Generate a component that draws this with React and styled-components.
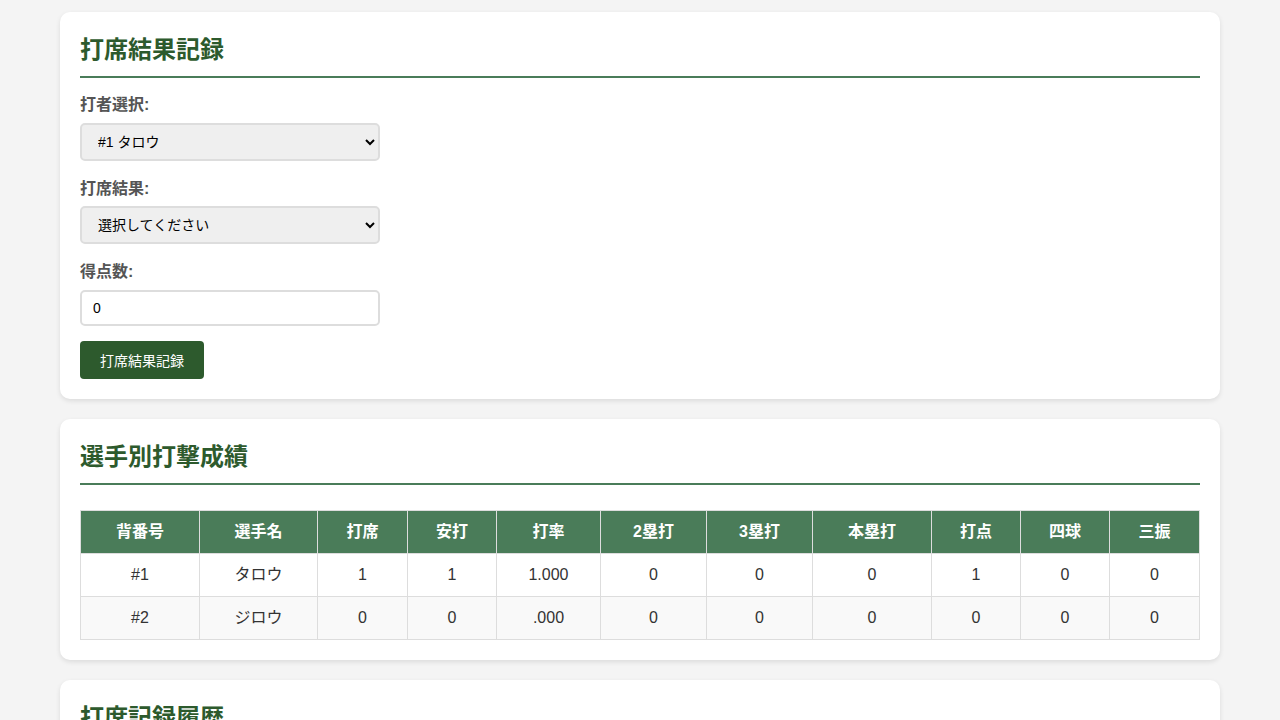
import React, { useState } from 'react';
import styled, { createGlobalStyle } from 'styled-components';

const GlobalStyle = createGlobalStyle`
  body {
    margin: 0;
    background: #f4f4f4;
    font-family: 'Liberation Sans', Arial, 'Noto Sans CJK JP', sans-serif;
    color: #333;
  }
`;

const Container = styled.div`
  max-width: 1160px;
  margin: 0 auto;
  padding: 12px 20px;
`;

const Card = styled.section`
  background: white;
  border-radius: 10px;
  padding: 20px;
  margin-bottom: 20px;
  box-shadow: 0 2px 5px rgba(0,0,0,0.1);
`;

const Title = styled.h2`
  margin: 0 0 14px;
  padding-bottom: 8px;
  font-size: 24px;
  line-height: 36px;
  font-weight: bold;
  color: #2d5a2d;
  border-bottom: 2px solid #4a7c59;
`;

const FormGroup = styled.div`
  margin-bottom: 15px;
`;

const Label = styled.label`
  display: block;
  margin-bottom: 5px;
  font-size: 16px;
  line-height: 25.5px;
  font-weight: bold;
  color: #555;
`;

const Select = styled.select`
  display: block;
  width: 300px;
  height: 38px;
  box-sizing: border-box;
  padding: 0 12px;
  border: 2px solid #ddd;
  border-radius: 5px;
  background: #efefef;
  font-size: 14px;
  font-family: inherit;
  color: #000;
`;

const Input = styled.input`
  display: block;
  width: 300px;
  height: 36px;
  box-sizing: border-box;
  padding: 0 11px;
  border: 2px solid #ddd;
  border-radius: 5px;
  font-size: 14px;
  font-family: inherit;
`;

const Button = styled.button`
  display: block;
  height: 38px;
  background: #2d5a2d;
  color: white;
  border: none;
  border-radius: 4px;
  padding: 0 20px;
  font-size: 14px;
  font-family: inherit;
  cursor: pointer;
`;

const Table = styled.table`
  width: 100%;
  border-collapse: collapse;
  margin-top: 25px;
`;

const Col = styled.col`
  width: ${p => p.$w}px;
`;

const Th = styled.th`
  background: #4a7c59;
  color: white;
  font-weight: bold;
  font-size: 16px;
  line-height: 18px;
  padding: 12px;
  border: 1px solid #ddd;
  text-align: center;
`;

const Row = styled.tr`
  background: ${p => (p.$alt ? '#f9f9f9' : 'white')};
`;

const Td = styled.td`
  padding: 12px;
  border: 1px solid #ddd;
  text-align: center;
  font-size: 16px;
  line-height: 18px;
  color: #333;
`;

const Empty = styled.p`
  margin: 0;
  color: #777;
  font-size: 14px;
`;

const headers = ['背番号', '選手名', '打席', '安打', '打率', '2塁打', '3塁打', '本塁打', '打点', '四球', '三振'];
const widths = [119, 118, 90, 89, 104, 106, 106, 119, 89, 89, 90];

const players = [
  { no: '#1', name: 'タロウ', pa: 1, h: 1, avg: '1.000', d: 0, t: 0, hr: 0, rbi: 1, bb: 0, so: 0 },
  { no: '#2', name: 'ジロウ', pa: 0, h: 0, avg: '.000', d: 0, t: 0, hr: 0, rbi: 0, bb: 0, so: 0 },
];

export default function App() {
  const [runs, setRuns] = useState('0');

  return (
    <Container>
      <GlobalStyle />
      <Card>
        <Title>打席結果記録</Title>
        <FormGroup>
          <Label htmlFor="batter">打者選択:</Label>
          <Select id="batter" defaultValue="1">
            <option value="1">#1 タロウ</option>
            <option value="2">#2 ジロウ</option>
          </Select>
        </FormGroup>
        <FormGroup>
          <Label htmlFor="result">打席結果:</Label>
          <Select id="result" defaultValue="">
            <option value="">選択してください</option>
            <option value="single">安打</option>
            <option value="double">2塁打</option>
            <option value="triple">3塁打</option>
            <option value="hr">本塁打</option>
            <option value="bb">四球</option>
            <option value="so">三振</option>
            <option value="out">凡退</option>
          </Select>
        </FormGroup>
        <FormGroup>
          <Label htmlFor="runs">得点数:</Label>
          <Input id="runs" type="number" min="0" value={runs} onChange={(e) => setRuns(e.target.value)} />
        </FormGroup>
        <Button>打席結果記録</Button>
      </Card>

      <Card>
        <Title>選手別打撃成績</Title>
        <Table>
          <colgroup>
            {widths.map((w, i) => <Col key={i} $w={w} />)}
          </colgroup>
          <thead>
            <tr>
              {headers.map((h) => <Th key={h}>{h}</Th>)}
            </tr>
          </thead>
          <tbody>
            {players.map((p, i) => (
              <Row key={p.no} $alt={i % 2 === 1}>
                <Td>{p.no}</Td>
                <Td>{p.name}</Td>
                <Td>{p.pa}</Td>
                <Td>{p.h}</Td>
                <Td>{p.avg}</Td>
                <Td>{p.d}</Td>
                <Td>{p.t}</Td>
                <Td>{p.hr}</Td>
                <Td>{p.rbi}</Td>
                <Td>{p.bb}</Td>
                <Td>{p.so}</Td>
              </Row>
            ))}
          </tbody>
        </Table>
      </Card>

      <Card>
        <Title>打席記録履歴</Title>
        <Empty>#1 タロウ: 安打 (1点)</Empty>
      </Card>
    </Container>
  );
}
